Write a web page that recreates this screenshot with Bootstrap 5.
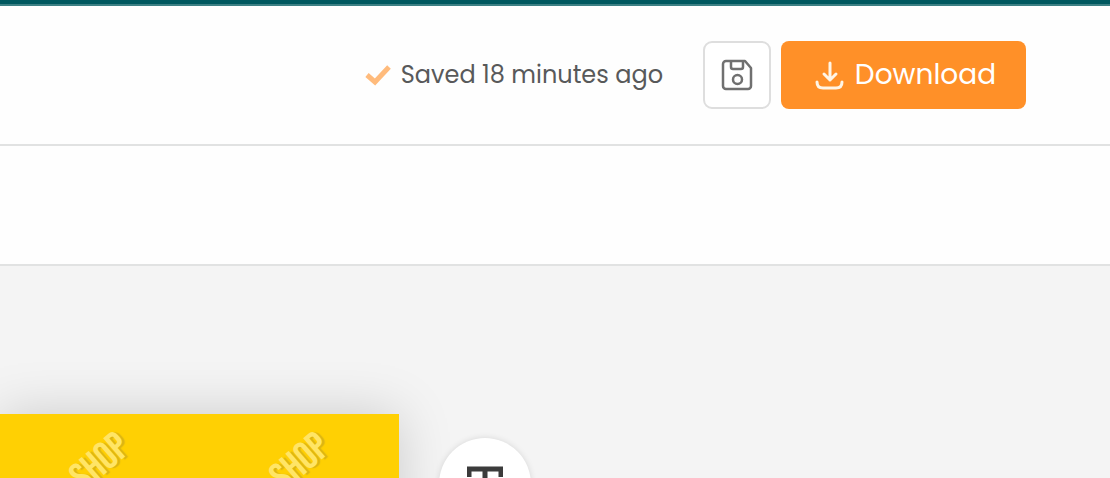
<!DOCTYPE html>
<html lang="en">
<head>
<meta charset="utf-8">
<meta name="viewport" content="width=device-width, initial-scale=1">
<title>Flyer editor</title>
<link href="https://cdn.jsdelivr.net/npm/bootstrap@5.3.0/dist/css/bootstrap.min.css" rel="stylesheet">
<style>
  body { font-family: Poppins, Inter, "Liberation Sans", sans-serif; background: #fefefe; }
  .brand-strip { height: 6px; background: #00585f; border-bottom: 2px solid #3c8084; }
  .editor-header { height: 140px; padding: 0 84px 0 24px; gap: 10px; border-bottom: 2px solid #e1e2e2; }
  .save-status { gap: 10px; margin-right: 30px; font-size: 24px; line-height: 36px; color: #58595a; }
  .btn-save { width: 68px; height: 68px; border: 2px solid #dedede; border-radius: 9px; background: #fff; color: #707070; }
  .btn-download { width: 245px; height: 68px; gap: 10px; border: 0; border-radius: 8px; background: #ff9028; color: #fff; font-size: 28px; line-height: 40px; }
  .btn-download:hover { background: #f5841a; color: #fff; }
  .option-bar { height: 120px; border-bottom: 2px solid #e1e2e2; }
  .workspace { background: #f4f4f4; min-height: 212px; }
  .artboard { width: 399px; height: 600px; margin-top: 148px; background: #ffd003; box-shadow: 0 0 50px rgba(0, 0, 0, .17); }
  .watermark { top: 28px; font-family: "Bebas Neue", "Liberation Sans Narrow", "DejaVu Sans Condensed", sans-serif; font-weight: 400; font-size: 40px; line-height: 40px; color: #ffe566; text-shadow: 2px 2px 1px #dbb514; transform: rotate(-41deg); }
  .mark-one { left: 69px; }
  .mark-two { left: 269px; }
  .text-tool { width: 92px; height: 92px; margin: 172px 0 0 40px; border: 0; background: #fff; color: #3b3b3b; box-shadow: 0 0 6px rgba(0, 0, 0, .12); }
</style>
</head>
<body class="vh-100 overflow-hidden d-flex flex-column">
  <div class="brand-strip flex-shrink-0"></div>
  <header class="editor-header d-flex align-items-center justify-content-end flex-shrink-0">
    <div class="save-status d-flex align-items-center" role="status">
      <svg width="26" height="22" viewBox="0 0 26 22" fill="none" aria-hidden="true"><path d="M2 11l8 7L24 3" stroke="#ffbb7c" stroke-width="5"/></svg>
      <span class="text-nowrap">Saved 18 minutes ago</span>
    </div>
    <button type="button" class="btn-save d-flex align-items-center justify-content-center p-0 flex-shrink-0" aria-label="Save">
      <svg width="32" height="32" viewBox="0 0 32 32" fill="none" stroke="currentColor" stroke-width="2.5" stroke-linejoin="round" aria-hidden="true"><path d="M5 2h19l6 7v18a3 3 0 0 1-3 3H5a3 3 0 0 1-3-3V5a3 3 0 0 1 3-3z"/><path d="M10 2v6a2 2 0 0 0 2 2h8a2 2 0 0 0 2-2V2"/><circle cx="16.500" cy="20.500" r="4.500"/></svg>
    </button>
    <button type="button" class="btn btn-download d-flex align-items-center justify-content-center py-0 ps-1 pe-0 flex-shrink-0">
      <svg width="30" height="30" viewBox="0 0 30 30" fill="none" stroke="#fff5e6" stroke-width="3" stroke-linecap="round" stroke-linejoin="round" aria-hidden="true"><path d="M15 3v17M9 14l6 6 6-6M2 22c0 4 2 6 6 6h13c4 0 6-2 6-6"/></svg>
      <span>Download</span>
    </button>
  </header>
  <div class="option-bar flex-shrink-0"></div>
  <main class="workspace d-flex align-items-start flex-grow-1 overflow-hidden">
    <section class="artboard position-relative flex-shrink-0" aria-label="Artboard">
      <span class="watermark mark-one position-absolute">SHOP</span>
      <span class="watermark mark-two position-absolute">SHOP</span>
    </section>
    <button type="button" class="text-tool rounded-circle d-flex align-items-center justify-content-center p-0 flex-shrink-0 position-relative" aria-label="Add text">
      <svg width="36" height="36" viewBox="0 0 36 36" fill="none" stroke="currentColor" stroke-width="5" aria-hidden="true"><path d="M0 3h36M2 1v10M34 1v10M18 1v33M10 34h16"/></svg>
    </button>
  </main>
<script src="https://cdn.jsdelivr.net/npm/bootstrap@5.3.0/dist/js/bootstrap.bundle.min.js"></script>
</body>
</html>
